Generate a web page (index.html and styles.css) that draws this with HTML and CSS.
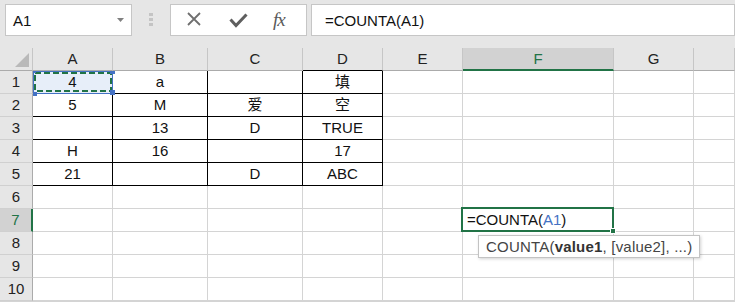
FILE: index.html
```html
<!DOCTYPE html>
<html lang="zh">

<head>
  <meta charset="UTF-8">
  <title>COUNTA</title>
  <link rel="stylesheet" href="styles.css">
</head>

<body>
  <div class="toolbar">
    <div class="namebox">
      <span>A1</span>
      <svg class="drop" width="8" height="5" viewBox="0 0 8 5"><path d="M0 0h7L3.5 4z" fill="#808080"/></svg>
    </div>
    <div class="grip"><i></i><i></i><i></i></div>
    <div class="fxbox">
      <svg class="ic-x" width="16" height="16" viewBox="0 0 16 16"><path d="M2 2L14 14M14 2L2 14" stroke="#6f6f6f" stroke-width="1.8" fill="none"/></svg>
      <svg class="ic-ok" width="19" height="15" viewBox="0 0 19 15"><path d="M1.5 6.5L7 12.5L17.5 1.5" stroke="#5f5f5f" stroke-width="3" fill="none"/></svg>
      <span class="fx">fx</span>
    </div>
    <div class="formula">=COUNTA(A1)</div>
  </div>

  <div class="sheet">
    <div class="corner"><svg width="16" height="16" viewBox="0 0 16 16"><path d="M15 1V15H1z" fill="#b9b9b9"/></svg></div>
    <div class="ch">A</div>
    <div class="ch">B</div>
    <div class="ch">C</div>
    <div class="ch dk">D</div>
    <div class="ch">E</div>
    <div class="ch sel">F</div>
    <div class="ch">G</div>
    <div class="ch"></div>

    <div class="rh">1</div>
    <div class="c b ref">
      <svg class="marquee" width="83" height="25" viewBox="0 0 83 25">
        <rect x="0" y="0" width="80" height="23" fill="#e7eef9"/>
        <rect x="0.5" y="0.5" width="79" height="22" fill="none" stroke="#4472c4"/>
        <rect x="2" y="2" width="76" height="18" fill="none" stroke="#217346" stroke-width="2" stroke-dasharray="6 3"/>
        <rect x="0" y="0" width="3" height="2" fill="#4472c4"/>
        <rect x="77" y="0" width="5" height="3" fill="#4472c4"/>
        <rect x="0" y="21" width="4" height="4" fill="#4472c4"/>
        <rect x="77" y="19" width="5" height="5" fill="#4472c4"/>
      </svg>
      4
    </div>
    <div class="c b">a</div>
    <div class="c b"></div>
    <div class="c b">填</div>
    <div class="c"></div><div class="c"></div><div class="c"></div><div class="c"></div>

    <div class="rh">2</div>
    <div class="c b">5</div>
    <div class="c b">M</div>
    <div class="c b">爱</div>
    <div class="c b">空</div>
    <div class="c"></div><div class="c"></div><div class="c"></div><div class="c"></div>

    <div class="rh">3</div>
    <div class="c b"></div>
    <div class="c b">13</div>
    <div class="c b">D</div>
    <div class="c b">TRUE</div>
    <div class="c"></div><div class="c"></div><div class="c"></div><div class="c"></div>

    <div class="rh">4</div>
    <div class="c b">H</div>
    <div class="c b">16</div>
    <div class="c b"></div>
    <div class="c b">17</div>
    <div class="c"></div><div class="c"></div><div class="c"></div><div class="c"></div>

    <div class="rh">5</div>
    <div class="c b">21</div>
    <div class="c b"></div>
    <div class="c b">D</div>
    <div class="c b">ABC</div>
    <div class="c"></div><div class="c"></div><div class="c"></div><div class="c"></div>

    <div class="rh">6</div>
    <div class="c"></div><div class="c"></div><div class="c"></div><div class="c"></div>
    <div class="c"></div><div class="c"></div><div class="c"></div><div class="c"></div>

    <div class="rh sel">7</div>
    <div class="c"></div><div class="c"></div><div class="c"></div><div class="c"></div>
    <div class="c"></div>
    <div class="c edit">
      <div class="active"><i class="handle"></i></div>
      =COUNTA(<span class="refa">A1</span>)
      <div class="tip">COUNTA(<b>value1</b>, [value2], ...)</div>
    </div>
    <div class="c"></div><div class="c"></div>

    <div class="rh">8</div>
    <div class="c"></div><div class="c"></div><div class="c"></div><div class="c"></div>
    <div class="c"></div><div class="c"></div><div class="c"></div><div class="c"></div>

    <div class="rh">9</div>
    <div class="c"></div><div class="c"></div><div class="c"></div><div class="c"></div>
    <div class="c"></div><div class="c"></div><div class="c"></div><div class="c"></div>

    <div class="rh">10</div>
    <div class="c"></div><div class="c"></div><div class="c"></div><div class="c"></div>
    <div class="c"></div><div class="c"></div><div class="c"></div><div class="c"></div>
  </div>
</body>

</html>
```

FILE: styles.css
```css
* {
  box-sizing: border-box;
}

html,
body {
  height: 100%;
}

body {
  margin: 0;
  overflow: hidden;
  background: #fff;
  font-family: "Liberation Sans", "Noto Sans CJK SC", sans-serif;
  font-size: 15px;
  color: #111;
}

/* formula bar */
.toolbar {
  height: 48px;
  background: #e6e6e6;
  display: flex;
  align-items: flex-start;
  padding: 4px 0 0 5px;
}

.namebox,
.fxbox,
.formula {
  height: 32px;
  background: #fff;
  border: 1px solid #c6c6c6;
  display: flex;
  align-items: center;
}

.namebox {
  width: 127px;
  padding: 0 6px 0 7px;
  justify-content: space-between;
}

.grip {
  width: 4px;
  margin: 9px 17px 0 17px;
  display: flex;
  flex-direction: column;
  gap: 2px;
}

.grip i {
  display: block;
  width: 4px;
  height: 3px;
  background: #c4c4c4;
}

.fxbox {
  width: 137px;
  padding-left: 15px;
}

.ic-x {
  margin-top: -2px;
}

.ic-ok {
  margin-left: 27px;
  margin-top: 1px;
}

.fx {
  margin-left: 25px;
  font-family: "Liberation Serif", serif;
  font-style: italic;
  font-size: 19px;
  color: #5a5a5a;
  letter-spacing: -1px;
}

.formula {
  flex: 1;
  margin-left: 4px;
  padding-left: 13px;
}

/* grid */
.sheet {
  display: grid;
  grid-template-columns: 33px 80px 95px 95px 80px 80px 151px 80px 1fr;
  grid-auto-rows: 23px;
  border-bottom: 1px solid #d4d4d4;
}

.corner,
.ch {
  background: #e6e6e6;
  border-right: 1px solid #c6c6c6;
  border-bottom: 1px solid #ababab;
}

.corner {
  display: flex;
  align-items: flex-end;
  justify-content: flex-end;
  padding: 0 2px 2px 0;
}

.ch {
  text-align: center;
  line-height: 22px;
  color: #222;
}

.ch.dk {
  border-bottom-color: #000;
}

.ch.sel {
  background: #d2d2d2;
  color: #217346;
  border-bottom: 2px solid #217346;
}

.rh {
  background: #e6e6e6;
  border-right: 1px solid #ababab;
  border-bottom: 1px solid #d0d0d0;
  text-align: center;
  line-height: 22px;
  color: #222;
}

.rh.sel {
  background: #d2d2d2;
  color: #217346;
  border-right: 2px solid #217346;
}

.c {
  border-right: 1px solid #d4d4d4;
  border-bottom: 1px solid #d4d4d4;
  text-align: center;
  line-height: 22px;
  white-space: nowrap;
}

.c.b {
  border-right-color: #000;
  border-bottom-color: #000;
}

.ref {
  position: relative;
  z-index: 0;
}

.marquee {
  position: absolute;
  left: 0;
  top: 0;
  z-index: -1;
}

/* editing cell */
.edit {
  position: relative;
  text-align: left;
  padding-left: 4px;
  color: #111;
  overflow: visible;
}

.refa {
  color: #4472c4;
}

.active {
  position: absolute;
  left: -2px;
  top: -2px;
  width: 153px;
  height: 25px;
  border: 2px solid #217346;
}

.handle {
  position: absolute;
  right: -4px;
  bottom: -4px;
  width: 6px;
  height: 6px;
  background: #217346;
  border: 1px solid #fff;
}

.tip {
  position: absolute;
  left: 15px;
  top: 26px;
  width: 222px;
  height: 23px;
  background: #fff;
  border: 1px solid #c3c3c3;
  box-shadow: 1px 1px 3px rgba(0, 0, 0, .18);
  padding-left: 7px;
  font-size: 15px;
  letter-spacing: .2px;
  line-height: 21px;
  color: #444;
}

.tip b {
  color: #333;
}
```
